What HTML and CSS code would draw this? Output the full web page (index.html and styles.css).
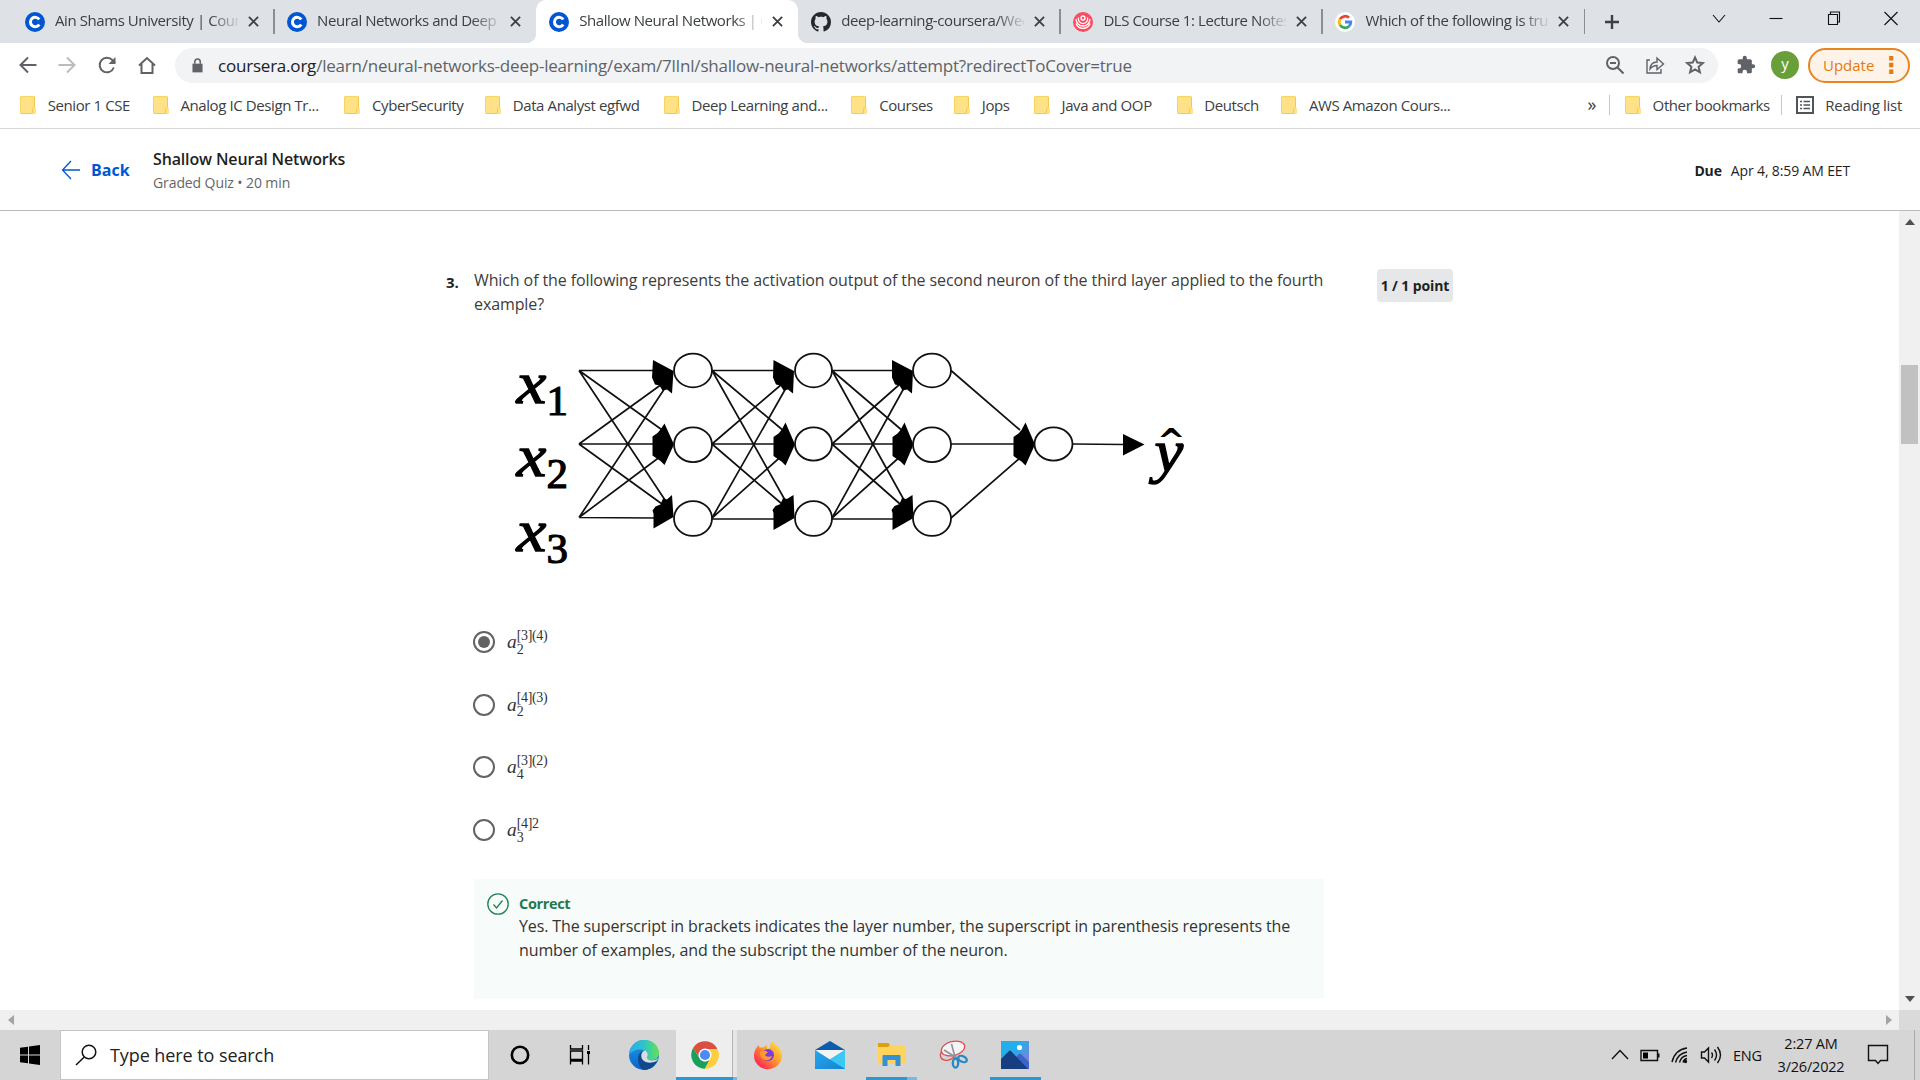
FILE: index.html
```html
<!DOCTYPE html>
<html lang="en">
<head>
<meta charset="utf-8">
<title>Shallow Neural Networks | Coursera</title>
<link rel="stylesheet" href="styles.css">
</head>
<body>
<svg class="defs" width="0" height="0">
  <defs>
    <symbol id="x" viewBox="0 0 12 12"><path d="M1 1l10 10M11 1L1 11" stroke="#3c4043" stroke-width="2" fill="none"/></symbol>
    <symbol id="coursera" viewBox="0 0 20 20"><circle cx="10" cy="10" r="10" fill="#0056d2"/><path d="M14.2 7.6A4.7 4.7 0 1 0 14.2 12.4" fill="none" stroke="#fff" stroke-width="3"/></symbol>
    <symbol id="folder" viewBox="0 0 16 18"><path d="M1 0h13q1 0 1 1v10q1 1 1 3v3q0 1-1 1H1q-1 0-1-1V1q0-1 1-1z" fill="#ffe287"/><path d="M.5 1v16M1 .6h13" stroke="#f8d45f" fill="none"/><path d="M1 17.5h11.5M14.5 1v10.5M12.5 17v-3.5q0-1.500 1.500-2" stroke="#f5ca48" fill="none"/></symbol>
    <linearGradient id="edgeTop" x1="0" x2="1"><stop offset="0" stop-color="#2fa9ee"/><stop offset=".5" stop-color="#2ec5c8"/><stop offset="1" stop-color="#65e052"/></linearGradient>
    <linearGradient id="edgeLow" x1="0" y1="0" x2="0" y2="1"><stop offset="0" stop-color="#1a9be8"/><stop offset="1" stop-color="#0a65c8"/></linearGradient>
    <linearGradient id="fox" x1="1" y1="0" x2="0" y2="1"><stop offset="0" stop-color="#fff44f"/><stop offset=".45" stop-color="#ff9a2a"/><stop offset=".8" stop-color="#ff3750"/><stop offset="1" stop-color="#e81c8a"/></linearGradient>
    <linearGradient id="sky" x1="0" y1="0" x2="1" y2="1"><stop offset=".4" stop-color="#25aeea"/><stop offset="1" stop-color="#a56ccc"/></linearGradient>
    <linearGradient id="mail" x1="0" y1="0" x2="1" y2="1"><stop offset="0" stop-color="#27a7ea"/><stop offset="1" stop-color="#1583d5"/></linearGradient>
  </defs>
</svg>

<div class="tabstrip">
  <div class="tab"><svg class="fav"><use href="#coursera"/></svg><span class="title">Ain Shams University | Coursera</span><svg class="close"><use href="#x"/></svg></div>
  <div class="tab line"><svg class="fav"><use href="#coursera"/></svg><span class="title">Neural Networks and Deep Learning</span><svg class="close"><use href="#x"/></svg></div>
  <div class="tab active"><svg class="fav"><use href="#coursera"/></svg><span class="title">Shallow Neural Networks | Coursera</span><svg class="close"><use href="#x"/></svg></div>
  <div class="tab"><svg class="fav" viewBox="0 0 16 16"><path fill="#24292f" d="M8 0C3.580 0 0 3.580 0 8c0 3.540 2.290 6.530 5.470 7.590.4.070.550-.170.550-.380 0-.190-.010-.820-.010-1.490-2.010.370-2.530-.490-2.690-.940-.090-.230-.480-.940-.820-1.130-.280-.150-.680-.520-.010-.530.630-.010 1.080.580 1.230.820.720 1.210 1.870.870 2.330.660.070-.520.280-.870.510-1.070-1.780-.2-3.640-.890-3.640-3.950 0-.870.310-1.590.820-2.150-.080-.2-.360-1.020.080-2.120 0 0 .670-.210 2.200.820.640-.180 1.320-.270 2-.270s1.360.090 2 .270c1.530-1.040 2.200-.820 2.200-.820.440 1.100.160 1.920.080 2.120.510.560.820 1.270.820 2.150 0 3.070-1.870 3.750-3.650 3.950.290.250.540.730.540 1.480 0 1.070-.010 1.930-.010 2.200 0 .210.150.460.550.380A8 8 0 0 0 16 8c0-4.420-3.580-8-8-8z"/></svg><span class="title">deep-learning-coursera/Week 3</span><svg class="close"><use href="#x"/></svg></div>
  <div class="tab line"><svg class="fav" viewBox="0 0 20 20"><circle cx="10" cy="10" r="10" fill="#fb4d61"/><g fill="none" stroke="#fff" stroke-width="1.300"><circle cx="10" cy="6" r="2"/><path d="M5.500 5.500a4.700 4.700 0 1 0 9 0M3 7a7 7 0 0 0 14 0M3 11.500a7.500 7.500 0 0 0 14 0"/></g></svg><span class="title">DLS Course 1: Lecture Notes - Course</span><svg class="close"><use href="#x"/></svg></div>
  <div class="tab line"><svg class="fav" viewBox="0 0 20 20"><circle cx="10" cy="10" r="10" fill="#fff"/><g fill="none" stroke-width="2.800"><path d="M5 7.100A5.800 5.800 0 0 1 14 5.800" stroke="#ea4335"/><path d="M5 7.100a5.800 5.800 0 0 0 0 5.800" stroke="#fbbc05"/><path d="M5 12.900a5.800 5.800 0 0 0 9 1.300" stroke="#34a853"/><path d="M10 10h5.800a5.800 5.800 0 0 1-1.800 4.200" stroke="#4285f4"/></g></svg><span class="title">Which of the following is true</span><svg class="close"><use href="#x"/></svg></div>
  <div class="newtab line"><svg width="16" height="16" viewBox="0 0 16 16"><path d="M8 1v14M1 8h14" stroke="#3c4043" stroke-width="2.400"/></svg></div>
  <div class="wincontrols">
    <svg viewBox="0 0 16 16"><path d="M2 5l6 7 6-7"/></svg>
    <svg viewBox="0 0 16 16"><path d="M1.500 8.500h13"/></svg>
    <svg viewBox="0 0 16 16"><path d="M2.500 4.500h9v10h-9zM4.500 4.500v-2.500h9v10h-2"/></svg>
    <svg viewBox="0 0 16 16"><path d="M1.500 2l13 13M14.500 2l-13 13"/></svg>
  </div>
</div>

<div class="toolbar">
  <div class="nav">
    <svg viewBox="0 0 20 20"><path d="M18.500 10H3M10 2.500L2.500 10l7.500 7.500"/></svg>
    <svg viewBox="0 0 20 20" class="off"><path d="M1.500 10H17M10 2.500l7.500 7.500-7.500 7.500"/></svg>
    <svg viewBox="0 0 20 20"><path d="M16.800 12.500A7.300 7.300 0 1 1 15.500 5.200L18 7.700"/><path d="M18.500 2v7h-7z" fill="#5f6368" stroke="none"/></svg>
    <svg viewBox="0 0 20 20"><path d="M2 10.500L10 3l8 7.500M4.500 9v9h11V9"/></svg>
  </div>
  <div class="omnibox">
    <svg class="lock" viewBox="0 0 12 16"><path d="M.5 6h11v9.500H.5z" fill="#5f6368"/><path d="M3 6V4a3 3 0 0 1 6 0v2" fill="none" stroke="#5f6368" stroke-width="1.700"/></svg>
    <span class="url"><b>coursera.org</b>/learn/neural-networks-deep-learning/exam/7lInl/shallow-neural-networks/attempt?redirectToCover=true</span>
    <div class="actions">
      <svg viewBox="0 0 20 20"><circle cx="8" cy="8" r="6"/><path d="M12.500 12.500l6 6M5 8h6"/></svg>
      <svg viewBox="0 0 20 20" class="thin"><path d="M5 5H2v13h14v-4"/><path d="M5 14c.5-5 3-7 7-7V3l6.500 6-6.500 5.500v-4c-3 0-5 1-7 3.500z"/></svg>
      <svg viewBox="0 0 20 20"><path d="M10 2.500l2.300 5.100 5.500.5-4.200 3.700 1.300 5.500-4.900-2.900-4.900 2.900 1.300-5.500-4.200-3.700 5.500-.5z"/></svg>
    </div>
  </div>
  <svg class="puzzle" viewBox="0 0 24 24"><path fill="#5f6368" d="M20.500 11H19V7c0-1.100-.9-2-2-2h-4V3.500a2.500 2.500 0 0 0-5 0V5H4c-1.100 0-2 .9-2 2v3.800h1.500a2.700 2.700 0 0 1 0 5.400H2V20c0 1.100.9 2 2 2h3.800v-1.500a2.700 2.700 0 0 1 5.400 0V22H17c1.100 0 2-.9 2-2v-4h1.500a2.500 2.500 0 0 0 0-5z"/></svg>
  <div class="avatar">y</div>
  <div class="update"><span>Update</span><i>&#8942;</i></div>
</div>

<div class="bookmarks">
  <div class="bm"><svg><use href="#folder"/></svg><span class="w82">Senior 1 CSE</span></div>
  <div class="bm"><svg><use href="#folder"/></svg><span class="w141">Analog IC Design Tr...</span></div>
  <div class="bm"><svg><use href="#folder"/></svg><span class="w90">CyberSecurity</span></div>
  <div class="bm"><svg><use href="#folder"/></svg><span class="w128">Data Analyst egfwd</span></div>
  <div class="bm"><svg><use href="#folder"/></svg><span class="w137">Deep Learning and...</span></div>
  <div class="bm"><svg><use href="#folder"/></svg><span class="w52">Courses</span></div>
  <div class="bm"><svg><use href="#folder"/></svg><span class="w29">Jops</span></div>
  <div class="bm"><svg><use href="#folder"/></svg><span class="w92">Java and OOP</span></div>
  <div class="bm"><svg><use href="#folder"/></svg><span class="w54">Deutsch</span></div>
  <div class="bm"><svg><use href="#folder"/></svg><span class="w141">AWS Amazon Cours...</span></div>
  <span class="more">»</span>
  <div class="bm other"><svg><use href="#folder"/></svg><span class="w115">Other bookmarks</span></div>
  <div class="bm reading"><svg viewBox="0 0 18 18"><path d="M1 1h16v16H1z" fill="none" stroke="#50555a" stroke-width="2"/><path d="M4 5.500h2M4 9h2M4 12.500h2M7.500 5.500H14M7.500 9H14M7.500 12.500H14" stroke="#50555a" stroke-width="1.500"/></svg><span>Reading list</span></div>
</div>

<header class="quizbar">
  <a class="back"><svg width="20" height="20" viewBox="0 0 20 20"><path d="M19 10H1.500M10 1L1.500 10l8.500 9" fill="none" stroke="#0056d2" stroke-width="1.300"/></svg><b>Back</b></a>
  <div class="heading"><h1>Shallow Neural Networks</h1><p>Graded Quiz • 20 min</p></div>
  <div class="due"><b>Due</b><span>Apr 4, 8:59 AM EET</span></div>
</header>

<div class="viewport">
  <main>
    <div class="num">3.</div>
    <section class="question">
      <p class="prompt">Which of the following represents the activation output of the second neuron of the third layer applied to the fourth<br>example?</p>
      <svg class="network" width="720" height="260" viewBox="500 325 720 260">
        <g stroke="#111" stroke-width="1.700" fill="none">
          <path d="M579 370.500H655M579 370.500L665 432M579 370.500L665 500M579 444L662 384M579 444H655M579 444L662 504M579 517.500L665 388M579 517.500L665 453M579 517.500L655 518"/>
          <path d="M712 370.500H775M712 370.500L785 432M712 370.500L785 500M712 444L782 384M712 444H775M712 444L782 504M712 518L786 388M712 518L785 453M712 519H775"/>
          <path d="M832 370.500H895M832 370.500L904 432M832 370.500L904 500M832 444L900 384M832 444H895M832 444L900 504M832 518L904 388M832 518L904 453M832 519H895"/>
          <path d="M951 370.500L1020 430M951 444H1015M951 518L1020 458M1073 444L1124 444.500"/>
        </g>
        <g fill="#000">
          <path d="M653 360l20.500 11-1.500 22.500-5-4-4.500 1-3-5-4.500-1-3-7z"/>
          <path d="M664.500 423.500l9.500 21-9.500 20.500-4-4-3-2-5-3.500v-19l5-3.500 3-3.500z"/>
          <path d="M672 495l1.500 22-20 11.500v-15l-1-3 3-4 5-2 2.500-6 4 1z"/>
          <path d="M773.500 360l20.500 11-1 22.500-5-4-4.500 1-3-5-4.500-1-3-7z"/>
          <path d="M785.500 422.500l9.500 22-9.500 21-4-4-3-2-5-3.500v-19l5-3.500 3-3.500z"/>
          <path d="M793.500 495l1 23-21 12v-17l-1-3 3-4 5-2 2.500-6 4 1z"/>
          <path d="M892 360l21 11-1 22.500-5-4-4.500 1-3-5-4.500-1-3-7z"/>
          <path d="M904.500 422.500l9 22-9 21-4-4-3-2-5-3.500v-19l5-3.500 3-3.500z"/>
          <path d="M912.500 495l1 23-21 12v-17l-1-3 3-4 5-2 2.500-6 4 1z"/>
          <path d="M1025.500 422.500l9.500 22-9.500 21-4-4-3-2-5-3.500v-19l5-3.500 3-3.500z"/>
          <path d="M1123 434l21.500 10.500L1123 455.500z"/>
        </g>
        <g fill="#fff" stroke="#111" stroke-width="1.800">
          <ellipse cx="693" cy="370.500" rx="19" ry="16.800"/><ellipse cx="693" cy="444.700" rx="19" ry="17.400"/><ellipse cx="693" cy="518.500" rx="19" ry="17.400"/>
          <ellipse cx="813.500" cy="370.500" rx="18.500" ry="16.800"/><ellipse cx="813.500" cy="444" rx="18.500" ry="16.600"/><ellipse cx="813.500" cy="518.500" rx="18.500" ry="17.400"/>
          <ellipse cx="932" cy="370.500" rx="19" ry="16.800"/><ellipse cx="932" cy="444.700" rx="19" ry="17.400"/><ellipse cx="932" cy="518.500" rx="19" ry="17.400"/>
          <ellipse cx="1053.500" cy="444" rx="19" ry="16.600"/>
        </g>
        <text class="var" transform="translate(516.500 402.500) scale(1.120 1)">x</text><text class="sub" x="546.500" y="414.500">1</text>
        <text class="var" transform="translate(516.500 476) scale(1.120 1)">x</text><text class="sub" x="546.500" y="488">2</text>
        <text class="var" transform="translate(516.500 550.500) scale(1.120 1)">x</text><text class="sub" x="546.500" y="562.500">3</text>
        <text class="var" transform="translate(1154.500 471) scale(1.080 1)">y</text><text class="hat" x="1157" y="453">^</text>
      </svg>
      <div class="options">
        <div class="option"><span class="radio on"></span><span class="math"><i>a</i><span class="scripts"><span>[3](4)</span><span>2</span></span></span></div>
        <div class="option"><span class="radio"></span><span class="math"><i>a</i><span class="scripts"><span>[4](3)</span><span>2</span></span></span></div>
        <div class="option"><span class="radio"></span><span class="math"><i>a</i><span class="scripts"><span>[3](2)</span><span>4</span></span></span></div>
        <div class="option"><span class="radio"></span><span class="math"><i>a</i><span class="scripts"><span>[4]2</span><span>3</span></span></span></div>
      </div>
      <div class="feedback">
        <svg width="22" height="22" viewBox="0 0 22 22"><g fill="none" stroke="#1f8354" stroke-width="1.300"><circle cx="11" cy="11" r="10.200"/><path d="M6.500 11.500l3 3.500 6-7.500"/></g></svg>
        <div><b>Correct</b><p>Yes. The superscript in brackets indicates the layer number, the superscript in parenthesis represents the<br>number of examples, and the subscript the number of the neuron.</p></div>
      </div>
    </section>
    <div class="points">1 / 1 point</div>
  </main>
  <div class="vscroll"><svg width="10" height="6"><path d="M0 6l5-6 5 6z" fill="#505050"/></svg><div class="thumb"></div><svg width="10" height="6"><path d="M0 0l5 6 5-6z" fill="#505050"/></svg></div>
</div>
<div class="hscroll"><svg width="6" height="10"><path d="M6 0L0 5l6 5z" fill="#a3a3a3"/></svg><svg width="6" height="10"><path d="M0 0l6 5-6 5z" fill="#a3a3a3"/></svg><div class="corner"></div></div>

<footer class="taskbar">
  <div class="start"><svg width="20" height="20" viewBox="0 0 20 20"><path d="M0 2.800l8-1.100v7.800H0zM9 1.500L20 0v9.500H9zM0 10.500h8v7.800l-8-1.100zM9 10.500h11V20L9 18.500z"/></svg></div>
  <div class="search"><svg width="22" height="22" viewBox="0 0 22 22"><g fill="none" stroke="#111" stroke-width="1.500"><circle cx="14" cy="8" r="6.800"/><path d="M9.300 13L1 21"/></g></svg><span>Type here to search</span></div>
  <div class="task"><svg viewBox="0 0 30 30"><circle cx="15" cy="15" r="8.200" fill="none" stroke="#000" stroke-width="2.600"/></svg></div>
  <div class="task"><svg viewBox="0 0 30 30"><path d="M3.500 5v4h12V5M3.500 11h12v8.500h-12zM3.500 24.500v-3.500h12v3.500M21.500 5v5M21.500 14v10.500" fill="none" stroke="#000" stroke-width="1.300"/><path d="M20 11h3v3h-3z"/></svg></div>
  <div class="task"><svg viewBox="0 0 30 30"><circle cx="15" cy="15" r="15" fill="url(#edgeLow)"/><path d="M1 10C4 3 9 0 15 0c9 0 15 6 15 13 0 5-4 7.500-8 7.500-4 0-5-1.500-4.500-2.500C20 14 17 10 12 9.500 7 9 2 12 0 15c0-2 .3-3.500 1-5z" fill="url(#edgeTop)"/><path d="M9 18c0-4 3-7 6-7-3 2-4 5-2 8 3 4 10 4 15 1 0 3-5 10-13 10-4-1-6-6-6-12z" fill="#104a8e"/><path d="M16 10.500c3 2 3.500 5 1.800 7 .3 2 2 3 5 3 2.500 0 5-.8 6.700-2.500L27.500 21c-4 2-9 2.500-12.500 0-3-2.300-3.500-7-1-9.500z" fill="#d9dde0"/></svg></div>
  <div class="task chrome"><svg viewBox="0 0 30 30"><circle cx="15" cy="15" r="13.700" fill="#fdce3f"/><path d="M3.100 8.100A13.700 13.700 0 0 1 26.900 8.100L27 9H15a6 6 0 0 0-5.500 8.500z" fill="#db4e42"/><path d="M3.100 8.100A13.700 13.700 0 0 0 14.800 28.700L20.500 18.300A6.200 6.200 0 0 1 9.500 18z" fill="#1aa05e"/><path d="M15 9h12.300a13.700 13.700 0 0 1-12.500 19.700l5.700-10.400A6.500 6.500 0 0 0 19 10z" fill="#fdce3f"/><circle cx="15" cy="15" r="6.500" fill="#fff"/><circle cx="15" cy="15" r="5.100" fill="#4c8bf5"/></svg></div>
  <div class="task"><svg viewBox="0 0 30 30"><path d="M19.500 1c1 3 3 3 5 5 3 3 4.500 6 4.500 9.500A14 13.500 0 0 1 1 16c0-4 1-6 3-9l1.500-2 1 2.500h3.500l4-2.500v4l3-1c0-3 .5-5 2.500-7z" fill="url(#fox)"/><circle cx="15" cy="15" r="6" fill="#7a3cdb"/><path d="M7 12c3-2 5-1 8 0l-3 3c1 2 4 2 7 1-1 4-5 5-8 3.500S7 16 7 12z" fill="#ff9b28"/></svg></div>
  <div class="task"><svg viewBox="0 0 30 30"><path d="M0 10L15 1l15 9z" fill="#0b5cad"/><path d="M2 10h26v10H2z" fill="#f3f3f3"/><path d="M0 10l15 9.500L30 10v19H0z" fill="url(#mail)"/><path d="M30 10v19L15 19.500z" fill="#3cc8f4"/></svg></div>
  <div class="task files"><svg viewBox="0 0 30 30"><path d="M2 3h11l2 2.500h14V24H2z" fill="#ffd45c"/><path d="M2 3h10q1.500 0 1.500 1.500T12 7H2z" fill="#dda006"/><path d="M6.500 26V16q0-1 1-1h16q1 0 1 1v10h-5v-6h-8v6z" fill="#348fd6"/></svg></div>
  <div class="task"><svg viewBox="0 0 30 30"><g fill="#f4f4f4" stroke="#df4b50" stroke-width="1.300"><ellipse cx="10" cy="14" rx="8" ry="6" fill="none" transform="rotate(-25 10 14)"/><ellipse cx="15" cy="8.500" rx="12" ry="7" transform="rotate(-15 15 8.500)"/></g><path d="M13.500 4l4 15M6 10l13 8" stroke="#8a949c" stroke-width="1.600"/><g fill="none" stroke="#2689c7" stroke-width="2.300"><ellipse cx="17.500" cy="23" rx="2.700" ry="4.500"/><ellipse cx="24.500" cy="19" rx="4.500" ry="2.800" transform="rotate(25 24.500 19)"/></g></svg></div>
  <div class="task photos"><svg viewBox="0 0 30 30"><path d="M1 1h28v28H1z" fill="url(#sky)"/><path d="M13 20l6-6q1-1 2 0l8 8v7H13z" fill="#3d65c9"/><path d="M1 19l8-8q1-1 2 0l17 18H1z" fill="#173e80"/><circle cx="19.500" cy="7.500" r="2.600" fill="#fff"/></svg></div>
  <div class="tray">
    <svg width="18" height="20" viewBox="0 0 18 20"><path d="M1 14l8-8.500 8 8.500"/></svg>
    <svg width="20" height="20" viewBox="0 0 20 20"><path d="M1 5.500h16.500v10H1zM18.800 8.500v4"/><path d="M3 7.500h5v6H3z" fill="#000" stroke="none"/></svg>
    <svg width="18" height="20" viewBox="0 0 18 20"><path d="M1 17C3 9 8 4 16 3M4.500 17.500C6 12 10 8 16 7M8.500 17.500c1-4 4-6.500 7.500-7M12 17.500c.5-2 2-3.500 4-4"/><circle cx="14.500" cy="16.500" r="1" fill="#000"/></svg>
    <svg width="22" height="20" viewBox="0 0 22 20"><path d="M1.500 7h3l4-4v14l-4-4h-3zM11.500 7.500q2 2.500 0 5.500M14.500 4.500q4 5.500 0 11M17.500 2q6 8 0 16"/></svg>
    <span class="lang">ENG</span>
    <div class="clock"><span>2:27 AM</span><span>3/26/2022</span></div>
    <svg width="22" height="22" viewBox="0 0 22 22"><path d="M1.500 1.500h19v15h-7l-2.500 3-2.500-3h-7z"/></svg>
  </div>
</footer>
</body>
</html>
```
FILE: styles.css
```css
* { box-sizing: border-box; }
body { margin: 0; width: 1920px; height: 1080px; overflow: hidden; background: #fff; display: flex; flex-direction: column; font-family: "Open Sans", "Noto Sans", sans-serif; color: #1f1f1f; white-space: nowrap; }
.defs { position: absolute; }
svg { display: block; flex: none; }
h1, p { margin: 0; }

/* Tabs */
.tabstrip { height: 43px; flex: none; background: #dee1e6; display: flex; padding-left: 12px; font-size: 15px; color: #3c4043; }
.tab { width: 262.100px; flex: none; display: flex; align-items: center; padding-left: 13px; position: relative; }
.line::before { content: ""; position: absolute; left: -1px; top: 9px; width: 1.500px; height: 25px; background: #8a8d91; }
.fav { width: 20px; height: 20px; }
.title { width: 183px; margin: -3px 0 0 10px; overflow: hidden; letter-spacing: -.42px; -webkit-mask-image: linear-gradient(90deg, #000 155px, transparent 186px); mask-image: linear-gradient(90deg, #000 155px, transparent 186px); }
.close { width: 11px; height: 11px; margin-left: 10px; }
.active { background: #fff; border-radius: 10px 10px 0 0; }
.active::before, .active::after { content: ""; position: absolute; bottom: 0; width: 10px; height: 10px; }
.active::before { left: -10px; background: radial-gradient(circle at 0 0, transparent 10px, #fff 10.500px); }
.active::after { right: -10px; background: radial-gradient(circle at 100% 0, transparent 10px, #fff 10.500px); }
.newtab { width: 55px; position: relative; display: grid; place-items: center; }
.wincontrols { margin-left: auto; display: flex; gap: 41.300px; padding: 10px 21px 0 0; }
.wincontrols svg { width: 16px; height: 16px; fill: none; stroke: #111; stroke-width: 1.100; }

/* Toolbar */
.toolbar { height: 44px; flex: none; display: flex; align-items: center; }
.nav { width: 175px; display: flex; gap: 19.800px; padding-left: 17.500px; }
.nav svg, .actions svg { width: 20px; height: 20px; fill: none; stroke: #5f6368; stroke-width: 2; }
.nav .off { stroke: #babcbe; }
.omnibox { width: 1543px; height: 35px; border-radius: 18px; background: #f1f3f4; display: flex; align-items: center; padding: 0 13px 0 17px; }
.lock { width: 11px; height: 15px; }
.url { margin-left: 15px; font-size: 17px; letter-spacing: -.21px; color: #5f6368; }
.url b { font-weight: 400; color: #202124; }
.actions { margin-left: auto; display: flex; gap: 20px; }
.actions .thin { stroke-width: 1.400; }
.puzzle { width: 20px; height: 20px; margin-left: 18px; }
.avatar { width: 28px; height: 28px; margin-left: 15px; border-radius: 50%; background: #689f38; color: #fff; font-size: 15px; line-height: 25px; text-align: center; }
.update { width: 102px; height: 35px; margin-left: 9px; border: 2px solid #e8861d; border-radius: 18px; background: #fdf3e9; color: #e27b0c; display: flex; align-items: center; padding: 0 5px 1px 13px; font-size: 15px; }
.update i { margin-left: auto; font: bold 23px/20px "DejaVu Sans", sans-serif; }

/* Bookmarks */
.bookmarks { height: 42px; flex: none; border-bottom: 1px solid #d5d7da; display: flex; align-items: center; padding: 0 0 5px 20px; font-size: 15px; letter-spacing: -.4px; color: #3c4043; }
.bm { display: flex; align-items: center; gap: 11.700px; margin-right: 23px; }
.bm svg { width: 16px; height: 18px; }
.w29 { width: 29px; } .w52 { width: 52px; } .w54 { width: 54px; } .w82 { width: 82px; } .w90 { width: 90px; }
.w92 { width: 92px; } .w115 { width: 115px; } .w128 { width: 128px; } .w137 { width: 137px; } .w141 { width: 141px; }
.more { margin-left: auto; font-size: 18px; margin-top: -3px; }
.other { margin: 0 13px 0 13px; border-left: 1px solid #c4c6c9; padding-left: 15px; height: 20px; }
.reading { border-left: 1px solid #c4c6c9; padding-left: 14px; margin-right: 18px; height: 20px; letter-spacing: -.3px; }
.bm.reading svg { width: 18px; }

/* Quiz header */
.quizbar { height: 82px; flex: none; border-bottom: 1px solid #bbb; display: flex; align-items: center; padding: 1px 70px 0 61px; }
.back { display: flex; align-items: center; gap: 10px; width: 92px; color: #0056d2; font-size: 16px; }
.heading { padding-top: 1px; }
.heading h1 { font-size: 16px; font-weight: 600; line-height: 24px; letter-spacing: -.15px; }
.heading p { font-size: 14px; line-height: 24px; letter-spacing: -.1px; color: #666; }
.due { margin-left: auto; display: flex; gap: 9px; font-size: 14px; letter-spacing: -.14px; }

/* Question */
.viewport { height: 799px; flex: none; display: flex; justify-content: space-between; }
main { display: flex; padding: 57px 0 0 446px; }
.num { width: 28px; padding-top: 4px; font-size: 15px; font-weight: 700; }
.question { width: 850px; }
.prompt { font-size: 16px; line-height: 24px; letter-spacing: -.106px; color: #3c3c3c; }
.network { margin: 9px 0 0 26px; }
.var { font: italic 60px "Liberation Serif", serif; stroke: #000; stroke-width: 1.300; }
.sub { font: 43px "Liberation Serif", serif; stroke: #000; stroke-width: 1.200; }
.hat { font: bold 34px "DejaVu Sans", sans-serif; }
.options { padding-top: 26px; }
.option { height: 62.600px; display: flex; align-items: center; }
.radio { width: 22px; height: 22px; margin-left: -1px; border: 2px solid #636363; border-radius: 50%; display: grid; place-items: center; }
.on::after { content: ""; width: 12px; height: 12px; border-radius: 50%; background: #636363; }
.math { margin-left: 12px; display: flex; align-items: center; font: 19.400px/24px "Liberation Serif", serif; color: #333; }
.scripts { display: flex; flex-direction: column; font-size: 14px; line-height: 14px; letter-spacing: -.35px; margin: 1px 0 0; }
.feedback { height: 120px; margin-top: 18px; background: #f7fbf9; display: flex; gap: 10px; padding: 14px 13px; font-size: 16px; line-height: 24px; letter-spacing: -.12px; color: #333; }
.feedback b { display: block; height: 21px; line-height: 21px; font-size: 14.500px; letter-spacing: -.35px; color: #1f7a4d; }
.points { width: 76px; height: 33px; margin: 1px 0 0 53px; border-radius: 4px; background: #e5e7e8; font-size: 14px; font-weight: 700; line-height: 33px; letter-spacing: -.1px; text-align: center; }

/* Scrollbars */
.vscroll { width: 21px; background: #f0f0f0; display: flex; flex-direction: column; align-items: center; padding: 8px 0; }
.thumb { width: 17px; height: 79px; margin: 140px 0 auto; background: #c1c1c1; }
.hscroll { height: 20px; flex: none; background: #f0f0f0; display: flex; align-items: center; padding-left: 8px; }
.hscroll svg + svg { margin-left: auto; }
.corner { width: 21px; height: 20px; margin-left: 7px; background: #dadada; }

/* Taskbar */
.taskbar { height: 50px; flex: none; background: #d5d5d5; display: flex; color: #111; }
.start { width: 60px; display: grid; place-items: center; }
.search { width: 429px; background: #fff; border: 1px solid #c4c4c4; display: flex; align-items: center; padding-left: 14px; gap: 13px; font-size: 18px; letter-spacing: -.08px; color: #222; }
.task { width: 61.900px; display: grid; place-items: center; position: relative; }
.task svg { width: 30px; height: 30px; }
.chrome { background: linear-gradient(90deg, #eee 56px, #b5b5b5 56px 57px, #e5e5e5 57px); margin: 0 0 0 1px; width: 61px; }
.chrome svg { margin-left: -2px; }
.chrome::after, .files::after, .photos::after { content: ""; position: absolute; bottom: 0; height: 3px; left: 0; width: 100%; background: linear-gradient(90deg, #2f97cf 57px, #7cb8dd 57px); }
.files::after { left: 6px; width: 51px; background: linear-gradient(90deg, #2f97cf 41px, #7cb8dd 41px); }
.photos::after { left: 6px; width: 51px; background: #2f97cf; }
.tray { width: 307px; margin-left: auto; display: flex; align-items: center; border-right: 1px solid #aaa; margin-right: 5px; padding: 0; font-size: 14.500px; letter-spacing: -.2px; }
.tray svg { fill: none; stroke: #111; stroke-width: 1.400; margin-right: 11px; }
.tray svg:first-child { margin-left: 3px; }
.lang { width: 28px; margin: 0 15px 0 0; }
.clock { display: flex; flex-direction: column; align-items: center; width: 70px; line-height: 23.500px; margin-right: 21px; }
.tray svg:last-child { margin-right: 0; }
```
